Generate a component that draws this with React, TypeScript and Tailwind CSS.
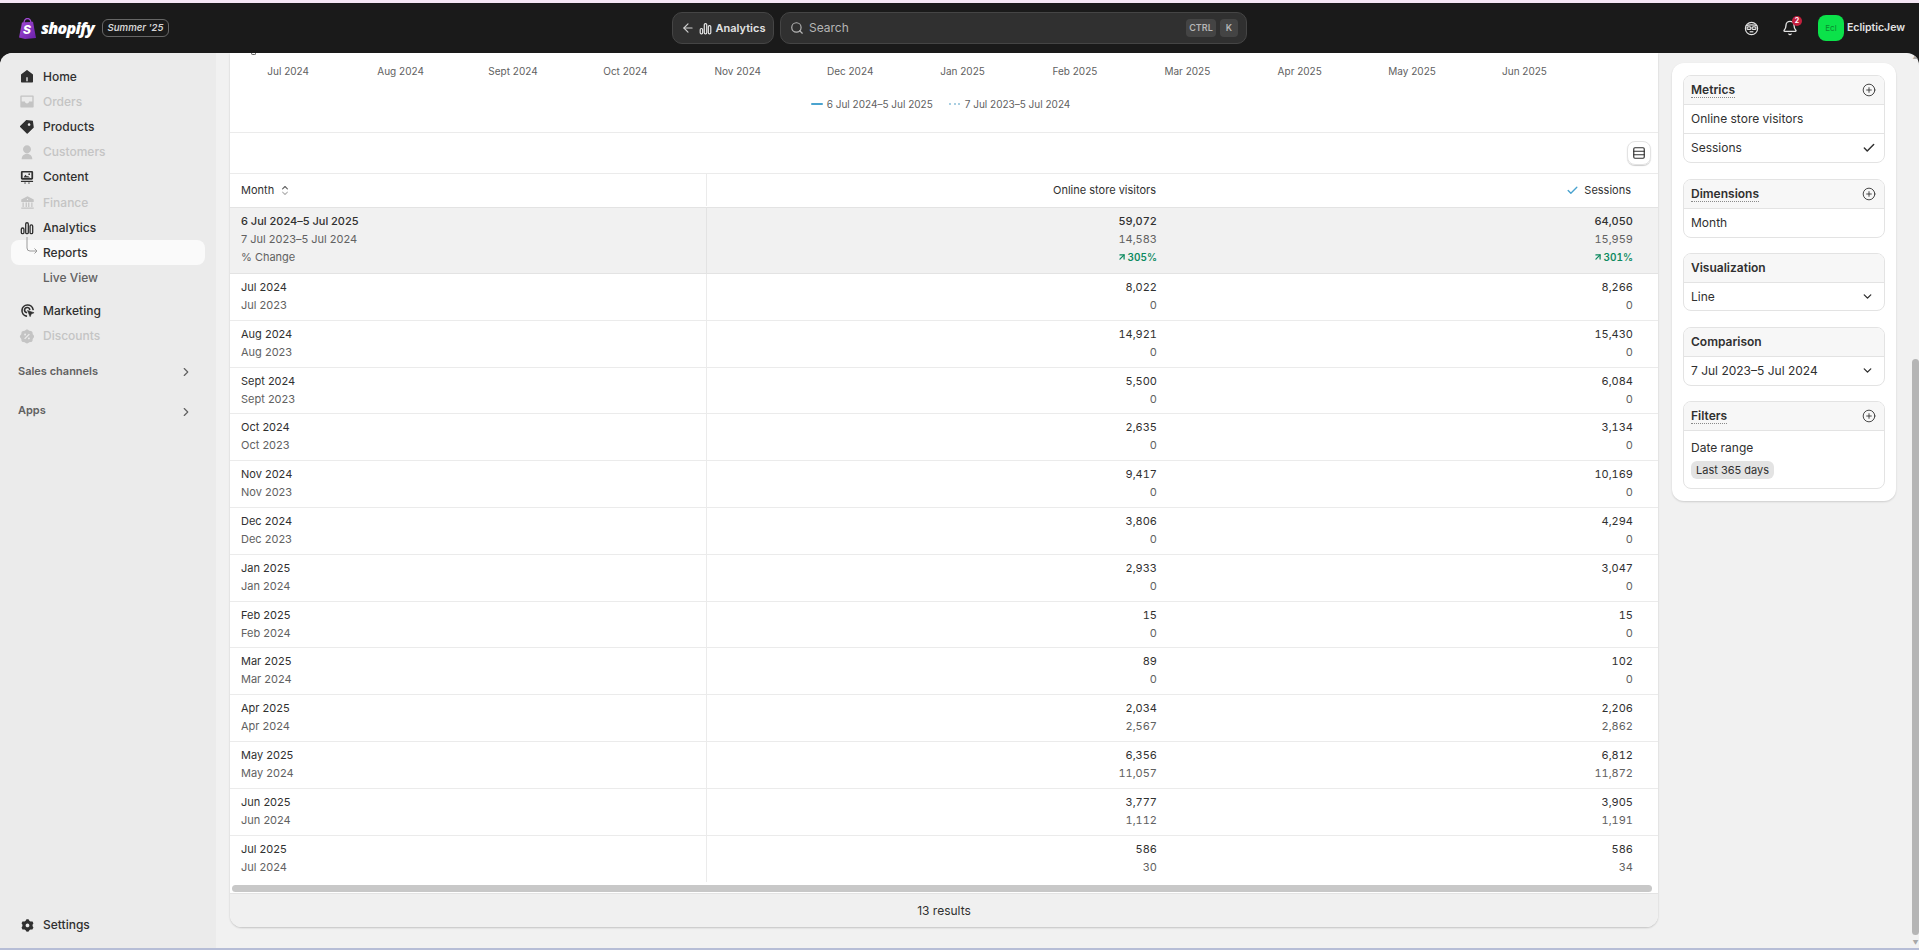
import React from 'react';
import { ArrowLeft, ArrowUpRight, Bell, Check, ChevronDown, ChevronRight, CirclePlus, Rows3, Search } from 'lucide-react';
import { RiBankFill, RiDiscountPercentFill, RiHome5Fill, RiInboxFill, RiPriceTag3Fill, RiSettings3Fill, RiUserFill } from 'react-icons/ri';

const BarsIcon = ({ className }: { className?: string }) => (
  <svg viewBox="0 0 16 16" className={className} fill="none" stroke="currentColor" strokeWidth="1.5">
    <rect x="1.5" y="8" width="3" height="6.5" rx="1.4" />
    <rect x="6.5" y="2" width="3" height="12.5" rx="1.4" />
    <rect x="11.5" y="4.5" width="3" height="10" rx="1.4" />
  </svg>
);

const ContentIcon = ({ className }: { className?: string }) => (
  <svg viewBox="0 0 16 16" className={className} fill="currentColor">
    <path fillRule="evenodd" d="M2.5 1h11A1.5 1.5 0 0 1 15 2.5v7a1.5 1.5 0 0 1-1.5 1.5h-11A1.5 1.5 0 0 1 1 9.500v-7A1.500 1.500 0 0 1 2.500 1zm.5 1.800v6.400h10V2.800zM10.500 3.800a1 1 0 1 1 0 2 1 1 0 0 1 0-2zM4 8.500 6.200 5.500 8 7.500 9 6.800 11.500 8.500z" />
    <rect x="1" y="12.400" width="14" height="1.300" rx="0.600" />
    <rect x="5" y="14.300" width="1.500" height="1.200" />
    <rect x="9.500" y="14.300" width="1.500" height="1.200" />
  </svg>
);

const MarketingIcon = ({ className }: { className?: string }) => (
  <svg viewBox="0 0 16 16" className={className} fill="none" stroke="currentColor" strokeWidth="1.700">
    <path d="M6.800 14A6 6 0 1 1 14 7" strokeLinecap="round" />
    <path d="M6.800 10.200A2.800 2.800 0 1 1 10.400 7" strokeLinecap="round" />
    <path d="M8 8l7 2.400-3 1.200-1.200 3z" fill="currentColor" strokeWidth="0.600" strokeLinejoin="round" />
  </svg>
);

const FaceIcon = ({ className }: { className?: string }) => (
  <svg viewBox="0 0 16 16" className={className} fill="none" stroke="currentColor" strokeWidth="1.300">
    <circle cx="8" cy="8" r="6.500" />
    <path d="M2 5.200C4 3.800 12 3.800 14 5.200" />
    <rect x="3.300" y="6.200" width="4" height="2.800" rx="1" />
    <rect x="8.700" y="6.200" width="4" height="2.800" rx="1" />
    <path d="M6 11.500h4" />
  </svg>
);

const SortIcon = () => (
  <svg viewBox="0 0 10 16" className="w-[8px] h-[13px]" fill="none" strokeWidth="1.400" strokeLinecap="round" strokeLinejoin="round">
    <path d="M2 6l3-3 3 3" stroke="#616161" />
    <path d="M2 10l3 3 3-3" stroke="#b5b5b5" />
  </svg>
);

const ShopifyBag = () => (
  <svg viewBox="0 0 17 21" className="w-[17px] h-[21px]">
    <defs>
      <linearGradient id="bag" x1="0" y1="0" x2="1" y2="1">
        <stop offset="0" stopColor="#a24ad6" />
        <stop offset="1" stopColor="#6a1fa8" />
      </linearGradient>
    </defs>
    <path d="M5 5c0-2.600 1.700-4.500 3.500-4.500S12 2.400 12 5" fill="none" stroke="#a24ad6" strokeWidth="1.300" />
    <path d="M3 4.500 14 3.800l3 16.200-11 1-6-1.600z" fill="url(#bag)" />
    <text x="8" y="16" fontSize="12" fontWeight="800" fontStyle="italic" fill="#fff" textAnchor="middle" fontFamily="Inter, sans-serif">S</text>
  </svg>
);

const navTop = [
  { label: 'Home', icon: <RiHome5Fill className="w-[17px] h-[17px]" /> },
  { label: 'Orders', icon: <RiInboxFill className="w-[17px] h-[17px]" />, off: true },
  { label: 'Products', icon: <RiPriceTag3Fill className="w-[17px] h-[17px]" /> },
  { label: 'Customers', icon: <RiUserFill className="w-[17px] h-[17px]" />, off: true },
  { label: 'Content', icon: <ContentIcon className="w-[14px] h-[14px]" /> },
  { label: 'Finance', icon: <RiBankFill className="w-[15px] h-[15px]" />, off: true },
  { label: 'Analytics', icon: <BarsIcon className="w-[14px] h-[14px]" /> },
];

const NavRow = ({ label, icon, off }: { label: string; icon: React.ReactNode; off?: boolean }) => (
  <div className={`flex items-center h-[25.2px] pl-[19px] text-[12px] font-medium ${off ? 'text-[#c4c4c4]' : 'text-[#303030]'}`}>
    <span className="w-[16px] flex justify-center mr-[8px]">{icon}</span>
    {label}
  </div>
);

const Sidebar = () => (
  <aside className="w-[216px] shrink-0 bg-[#ebebeb] rounded-tl-xl flex flex-col pt-[11px] pb-[10px]">
    {navTop.map(n => <NavRow key={n.label} {...n} />)}
    <div className="relative mx-[11px] h-[25px] bg-[#fafafa] rounded-lg flex items-center pl-[32px] text-[12px] font-medium text-[#303030]">
      Reports
      <svg viewBox="0 0 12 20" className="absolute left-[15px] top-[-3px] w-[12px] h-[20px]" fill="none" stroke="#9a9a9a" strokeWidth="1">
        <path d="M1 0v11a3 3 0 0 0 3 3h7M8.500 11.500 11 14l-2.500 2.500" />
      </svg>
    </div>
    <div className="h-[25px] flex items-center pl-[43px] text-[12px] font-medium text-[#616161]">Live View</div>
    <div className="mt-[8px]">
      <NavRow label="Marketing" icon={<MarketingIcon className="w-[15px] h-[15px]" />} />
      <NavRow label="Discounts" icon={<RiDiscountPercentFill className="w-[17px] h-[17px]" />} off />
    </div>
    <div className="mt-[10px] h-[25px] pl-[18px] pr-[23px] flex items-center justify-between text-[11px] font-semibold text-[#616161]">
      Sales channels <ChevronRight className="w-[14px] h-[14px] mt-[2px]" />
    </div>
    <div className="mt-[14px] h-[25px] pl-[18px] pr-[23px] flex items-center justify-between text-[11px] font-semibold text-[#616161]">
      Apps <ChevronRight className="w-[14px] h-[14px] mt-[4px]" />
    </div>
    <div className="mt-auto">
      <NavRow label="Settings" icon={<RiSettings3Fill className="w-[15px] h-[15px]" />} />
    </div>
  </aside>
);

const TopBar = () => (
  <header className="h-[50px] shrink-0 bg-[#1a1a1a] flex items-center">
    <div className="w-[672px] shrink-0 flex items-center pl-[19px]">
      <ShopifyBag />
      <span className="ml-[5px] text-white text-[16px] font-extrabold italic tracking-[-0.7px] font-['Open_Sans',sans-serif]">shopify</span>
      <span className="ml-[8px] h-[18px] w-[67px] flex items-center justify-center rounded-md border border-[#666] text-[#d4d4d4] text-[9.500px] font-semibold italic">Summer '25</span>
    </div>
    <div className="w-[102px] h-[32px] shrink-0 flex items-center justify-center gap-[4px] rounded-[10px] bg-[#303030] border border-[#454545] text-[#e3e3e3]">
      <ArrowLeft className="w-[14px] h-[14px] text-[#cfcfcf]" />
      <BarsIcon className="w-[13px] h-[13px]" />
      <span className="text-[11px] font-semibold">Analytics</span>
    </div>
    <div className="ml-[6px] w-[467px] h-[32px] shrink-0 flex items-center rounded-[10px] bg-[#303030] border border-[#454545] pl-[9px] pr-[8px] text-[#b5b5b5]">
      <Search className="w-[14px] h-[14px]" />
      <span className="ml-[5px] text-[12px]">Search</span>
      <span className="ml-auto h-[18px] w-[30px] rounded bg-[#444] flex items-center justify-center text-[9px] font-semibold">CTRL</span>
      <span className="ml-[4px] h-[18px] w-[18px] rounded bg-[#444] flex items-center justify-center text-[9px] font-semibold">K</span>
    </div>
    <div className="ml-auto flex items-center text-[#e3e3e3]">
      <FaceIcon className="w-[15px] h-[15px]" />
      <div className="relative ml-[23px]">
        <Bell className="w-[16px] h-[16px]" />
        <span className="absolute -top-[4px] -right-[4px] w-[10px] h-[10px] rounded-full bg-[#c4203e] text-white text-[7px] font-bold flex items-center justify-center">2</span>
      </div>
      <div className="ml-[20px] w-[26px] h-[26px] rounded-lg bg-[#0be24a] flex items-center justify-center text-[8px] text-[#0a8a30]">Ecl</div>
      <span className="ml-[3px] mr-[14px] text-[10.500px] font-semibold">EclipticJew</span>
    </div>
  </header>
);

const months = ['Jul 2024', 'Aug 2024', 'Sept 2024', 'Oct 2024', 'Nov 2024', 'Dec 2024', 'Jan 2025', 'Feb 2025', 'Mar 2025', 'Apr 2025', 'May 2025', 'Jun 2025'];

const rows = [
  ['Jul 2024', 'Jul 2023', '8,022', '0', '8,266', '0'],
  ['Aug 2024', 'Aug 2023', '14,921', '0', '15,430', '0'],
  ['Sept 2024', 'Sept 2023', '5,500', '0', '6,084', '0'],
  ['Oct 2024', 'Oct 2023', '2,635', '0', '3,134', '0'],
  ['Nov 2024', 'Nov 2023', '9,417', '0', '10,169', '0'],
  ['Dec 2024', 'Dec 2023', '3,806', '0', '4,294', '0'],
  ['Jan 2025', 'Jan 2024', '2,933', '0', '3,047', '0'],
  ['Feb 2025', 'Feb 2024', '15', '0', '15', '0'],
  ['Mar 2025', 'Mar 2024', '89', '0', '102', '0'],
  ['Apr 2025', 'Apr 2024', '2,034', '2,567', '2,206', '2,862'],
  ['May 2025', 'May 2024', '6,356', '11,057', '6,812', '11,872'],
  ['Jun 2025', 'Jun 2024', '3,777', '1,112', '3,905', '1,191'],
  ['Jul 2025', 'Jul 2024', '586', '30', '586', '34'],
];

const gridCols = 'grid grid-cols-[477px_462px_1fr]';

const Pct = ({ value }: { value: string }) => (
  <div className="h-[18px] flex items-center justify-end gap-[1px] text-[10px] font-semibold text-[#0c8a5f]">
    <ArrowUpRight className="w-[10px] h-[10px]" strokeWidth={3} />
    {value}
  </div>
);

const Report = () => (
  <section className="w-[1428px] shrink-0 ml-[14px] h-[874px] bg-white rounded-b-xl shadow-[0_1px_2px_rgba(0,0,0,0.2)] flex flex-col overflow-hidden">
    <div className="h-[80px] shrink-0 border-b border-[#ebebeb]">
      <div className="ml-[21px] w-[5px] h-[2px] border border-t-0 border-[#616161] rounded-b-full" />
      <div className="flex pl-[2px] pt-[9px]">
        {months.map(m => (
          <span key={m} className="w-[112.4px] text-center text-[10px] leading-[14px] text-[#616161]">{m}</span>
        ))}
      </div>
      <div className="flex justify-center items-center mt-[19px] pr-[7px] text-[10px] leading-[14px] text-[#616161]">
        <span className="w-[12px] h-[2px] bg-[#4aa3cf] rounded mr-[4px]" />
        6 Jul 2024–5 Jul 2025
        <span className="ml-[16px] mr-[5px] w-[11px] border-t-2 border-dotted border-[#a9cfe2]" />
        7 Jul 2023–5 Jul 2024
      </div>
    </div>
    <div className="h-[41px] shrink-0 border-b border-[#ebebeb] flex items-center justify-end pr-[7px]">
      <div className="w-[24px] h-[24px] rounded-lg border border-[#e3e3e3] shadow-[0_1px_1px_rgba(0,0,0,0.2)] flex items-center justify-center text-[#303030]">
        <Rows3 className="w-[14px] h-[14px]" />
      </div>
    </div>
    <div className={`${gridCols} h-[34px] shrink-0 border-b border-[#e3e3e3] text-[11px] leading-[15px] pb-[1px] text-[#303030]`}>
      <div className="flex items-center gap-[7px] pl-[11px] border-r border-[#ebebeb]">Month <SortIcon /></div>
      <div className="flex items-center justify-end pr-[13px]">Online store visitors</div>
      <div className="flex items-center justify-end pr-[27px] gap-[5px]">
        <Check className="w-[13px] h-[13px] text-[#4aa3cf]" strokeWidth={2.500} />
        Sessions
      </div>
    </div>
    <div className={`${gridCols} h-[66px] shrink-0 bg-[#f1f1f1] border-b border-[#e3e3e3] text-[11px] leading-[18px] text-[#616161]`}>
      <div className="pl-[11px] pt-[4px] border-r border-[#e3e3e3]">
        <div className="text-[#303030] font-medium">6 Jul 2024–5 Jul 2025</div>
        <div>7 Jul 2023–5 Jul 2024</div>
        <div>% Change</div>
      </div>
      <div className="pr-[12px] pt-[4px] text-right tabular-nums">
        <div className="text-[#303030] font-medium">59,072</div>
        <div>14,583</div>
        <Pct value="305%" />
      </div>
      <div className="pr-[25px] pt-[4px] text-right tabular-nums">
        <div className="text-[#303030] font-medium">64,050</div>
        <div>15,959</div>
        <Pct value="301%" />
      </div>
    </div>
    {rows.map((r, i) => (
      <div key={r[0]} className={`${gridCols} h-[46.800px] shrink-0 text-[11px] leading-[18px] text-[#616161] ${i < rows.length - 1 ? 'border-b border-[#ebebeb]' : ''}`}>
        <div className="pl-[11px] pt-[4px] border-r border-[#ebebeb]">
          <div className="text-[#303030]">{r[0]}</div>
          <div>{r[1]}</div>
        </div>
        <div className="pr-[12px] pt-[4px] text-right tabular-nums">
          <div className="text-[#303030]">{r[2]}</div>
          <div>{r[3]}</div>
        </div>
        <div className="pr-[25px] pt-[4px] text-right tabular-nums">
          <div className="text-[#303030]">{r[4]}</div>
          <div>{r[5]}</div>
        </div>
      </div>
    ))}
    <div className="h-[11px] shrink-0 pt-[3px] pl-[2px] pr-[6px]">
      <div className="h-[7px] rounded bg-[#c8c8c8]" />
    </div>
    <div className="flex-1 bg-[#f0f0f0] border-t border-[#e3e3e3] flex items-center justify-center text-[12px] text-[#303030]">13 results</div>
  </section>
);

const PanelBox = ({ title, dotted, plus, children }: { title: string; dotted?: boolean; plus?: boolean; children: React.ReactNode }) => (
  <div className="border border-[#e3e3e3] rounded-lg overflow-hidden">
    <div className="h-[29px] bg-[#f7f7f7] border-b border-[#e3e3e3] pl-[7px] pr-[8px] flex items-center justify-between text-[12px] font-semibold text-[#303030]">
      <span className={dotted ? 'border-b border-dotted border-[#8a8a8a] leading-[15px]' : ''}>{title}</span>
      {plus && <CirclePlus className="w-[14px] h-[14px] text-[#303030]" strokeWidth={1.500} />}
    </div>
    {children}
  </div>
);

const PanelRow = ({ children, end, h = 'h-[28px]', line }: { children: React.ReactNode; end?: React.ReactNode; h?: string; line?: boolean }) => (
  <div className={`${h} pl-[7px] pr-[8px] flex items-center justify-between text-[12px] text-[#303030] ${line ? 'border-b border-[#e3e3e3]' : ''}`}>
    <span>{children}</span>
    {end}
  </div>
);

const Panel = () => (
  <aside className="w-[224px] shrink-0 ml-[14px] mt-[10px] h-[438px] bg-white rounded-xl shadow-[0_1px_2px_rgba(0,0,0,0.15)] px-[11px] pt-[12px] flex flex-col gap-[15.500px]">
    <PanelBox title="Metrics" dotted plus>
      <PanelRow h="h-[29px]" line>Online store visitors</PanelRow>
      <PanelRow end={<Check className="w-[14px] h-[14px]" strokeWidth={2.500} />}>Sessions</PanelRow>
    </PanelBox>
    <PanelBox title="Dimensions" dotted plus>
      <PanelRow>Month</PanelRow>
    </PanelBox>
    <PanelBox title="Visualization">
      <PanelRow h="h-[27px]" end={<ChevronDown className="w-[13px] h-[13px] mr-[2px]" strokeWidth={2.500} />}>Line</PanelRow>
    </PanelBox>
    <PanelBox title="Comparison">
      <PanelRow end={<ChevronDown className="w-[13px] h-[13px] mr-[2px]" strokeWidth={2.500} />}>7 Jul 2023–5 Jul 2024</PanelRow>
    </PanelBox>
    <PanelBox title="Filters" dotted plus>
      <div className="h-[57px] pl-[7px] pt-[9px] text-[12px] leading-[16px] text-[#303030]">
        <div>Date range</div>
        <span className="mt-[5px] inline-flex h-[18px] items-center rounded-md bg-[#e3e3e3] px-[5px] text-[11px]">Last 365 days</span>
      </div>
    </PanelBox>
  </aside>
);

const PageScrollbar = () => (
  <div className="w-[7px] ml-auto shrink-0 flex flex-col pt-[1px]">
    <div className="h-[5px] text-[#a8a8a8] text-[6px] leading-[5px] text-center">▲</div>
    <div className="mt-[300px] h-[576px] bg-[#b5b5b5] rounded-sm" />
    <div className="mt-[5px] h-[5px] text-[#a8a8a8] text-[6px] leading-[5px] text-center">▼</div>
  </div>
);

export default function App() {
  return (
    <div className="h-[950px] w-full overflow-hidden flex flex-col bg-[#1a1a1a] font-['Inter',sans-serif]">
      <div className="h-[3px] shrink-0 bg-[#f4e6f4]" />
      <TopBar />
      <div className="flex-1 min-h-0 flex bg-[#f1f1f1] rounded-t-xl overflow-hidden">
        <Sidebar />
        <Report />
        <Panel />
        <PageScrollbar />
      </div>
      <div className="h-[2px] shrink-0 bg-[#b6bdd6]" />
    </div>
  );
}
